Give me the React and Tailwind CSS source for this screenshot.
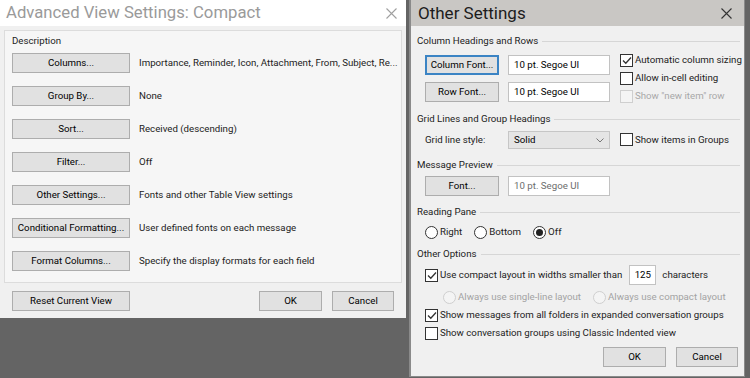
import React from 'react';

const font = { fontFamily: 'Roboto, "Open Sans", sans-serif' };

const WinButton = ({ children, className = '', focused = false }) => (
    <div
        className={`flex items-center justify-center h-[20px] bg-[#e1e1e1] text-[9.7px] text-black whitespace-nowrap ${focused ? 'border-2 border-[#3b84c4]' : 'border border-[#adadad]'} ${className}`}
    >
        {children}
    </div>
);

const Check = ({ checked = false, disabled = false }) => (
    <div className={`w-[13px] h-[13px] shrink-0 border flex items-center justify-center ${disabled ? 'border-[#cfcfcf] bg-[#f4f4f4]' : 'border-[#333] bg-white'}`}>
        {checked && (
            <svg width="10" height="9" viewBox="0 0 10 9">
                <path d="M1 4.5 L3.8 7.3 L9 1.5" fill="none" stroke="#333" strokeWidth="1.3" />
            </svg>
        )}
    </div>
);

const Radio = ({ checked = false, disabled = false }) => (
    <div className={`w-[13px] h-[13px] shrink-0 rounded-full border flex items-center justify-center ${disabled ? 'border-[#cfcfcf] bg-[#f4f4f4]' : 'border-[#333] bg-white'}`}>
        {checked && <div className="w-[7px] h-[7px] rounded-full bg-[#222]" />}
    </div>
);

const TextBox = ({ children, className = '', muted = false }) => (
    <div className={`h-[20px] bg-white border border-[#c2c2c2] flex items-center px-[5px] text-[9.7px] whitespace-nowrap ${muted ? 'text-[#6d6d6d]' : 'text-black'} ${className}`}>
        {children}
    </div>
);

const Heading = ({ children, className = '' }) => (
    <div className={`flex items-center gap-[4px] h-[14px] ${className}`}>
        <span className="text-[9.7px] text-[#222] whitespace-nowrap">{children}</span>
        <div className="flex-1 h-px bg-[#d6d6d6]" />
    </div>
);

const rows = [
    ['Columns...', 'Importance, Reminder, Icon, Attachment, From, Subject, Re...'],
    ['Group By...', 'None'],
    ['Sort...', 'Received (descending)'],
    ['Filter...', 'Off'],
    ['Other Settings...', 'Fonts and other Table View settings'],
    ['Conditional Formatting...', 'User defined fonts on each message'],
    ['Format Columns...', 'Specify the display formats for each field'],
];

const CloseX = ({ color }) => (
    <svg width="11" height="11" viewBox="0 0 11 11">
        <path d="M0.5 0.5 L10.5 10.5 M10.5 0.5 L0.5 10.5" stroke={color} strokeWidth="1.1" />
    </svg>
);

const AdvancedView = () => (
    <div className="w-[406px] h-[318px] bg-[#f0f0f0] flex flex-col shrink-0">
        <div className="h-[26px] bg-white flex items-center justify-between pl-[6px] pr-[9px]">
            <span className="text-[16.7px] text-[#9a9a9a] leading-none">Advanced View Settings: Compact</span>
            <CloseX color="#a0a0a0" />
        </div>
        <div className="mx-[4px] mt-[4px] h-[253px] border border-[#dcdcdc] bg-[#f6f6f6] pl-[7px] pt-[3px]">
            <div className="text-[9.7px] text-[#222] h-[14px] leading-[14px]">Description</div>
            <div className="flex flex-col gap-[13px] mt-[5px]">
                {rows.map(([label, desc]) => (
                    <div key={label} className="flex items-center h-[20px]">
                        <WinButton className="w-[118px]">{label}</WinButton>
                        <span className="ml-[9px] text-[9.7px] text-[#222] whitespace-nowrap">{desc}</span>
                    </div>
                ))}
            </div>
        </div>
        <div className="flex items-center mt-[8px] px-[12px]">
            <WinButton className="w-[118px]">Reset Current View</WinButton>
            <div className="flex-1" />
            <WinButton className="w-[63px]">OK</WinButton>
            <WinButton className="w-[62px] ml-[10px]">Cancel</WinButton>
        </div>
    </div>
);

const OtherSettings = () => (
    <div className="ml-[3px] w-[336px] h-[377px] bg-[#f0f0f0] border-l-2 border-r border-b border-[#8a8a8a] flex flex-col shrink-0">
        <div className="h-[26px] bg-[#c9c7c4] flex items-center justify-between pl-[7px] pr-[12px]">
            <span className="text-[17px] text-[#1c1c1c] leading-none">Other Settings</span>
            <CloseX color="#333" />
        </div>
        <div className="pl-[6px] pr-[4px]">
            <Heading className="mt-[8px]">Column Headings and Rows</Heading>
            <div className="flex mt-[2px]">
                <div className="flex flex-col gap-[7px] pl-[8px] pt-[5px]">
                    <div className="flex items-center">
                        <WinButton focused className="w-[74px]">Column Font...</WinButton>
                        <TextBox className="w-[102px] ml-[9px]">10 pt. Segoe UI</TextBox>
                    </div>
                    <div className="flex items-center">
                        <WinButton className="w-[74px]">Row Font...</WinButton>
                        <TextBox className="w-[102px] ml-[9px]">10 pt. Segoe UI</TextBox>
                    </div>
                </div>
                <div className="flex flex-col ml-[10px] text-[9.7px] whitespace-nowrap">
                    <div className="flex items-center gap-[2px] h-[18px] mt-[1px]"><Check checked /><span className="text-[#222]">Automatic column sizing</span></div>
                    <div className="flex items-center gap-[2px] h-[18px]"><Check /><span className="text-[#222]">Allow in-cell editing</span></div>
                    <div className="flex items-center gap-[2px] h-[18px]"><Check disabled /><span className="text-[#a8a8a8]">Show "new item" row</span></div>
                </div>
            </div>
            <Heading className="mt-[7px]">Grid Lines and Group Headings</Heading>
            <div className="flex items-center mt-[5px] pl-[8px] h-[18px] text-[9.7px] whitespace-nowrap">
                <span className="w-[83px] text-[#222]">Grid line style:</span>
                <div className="w-[102px] h-[18px] bg-[#e5e5e5] border border-[#c6c6c6] flex items-center justify-between px-[5px]">
                    <span>Solid</span>
                    <svg width="8" height="5" viewBox="0 0 8 5"><path d="M0.5 0.5 L4 4 L7.5 0.5" fill="none" stroke="#777" /></svg>
                </div>
                <div className="flex items-center gap-[2px] ml-[10px]"><Check /><span className="text-[#222]">Show items in Groups</span></div>
            </div>
            <Heading className="mt-[9px]">Message Preview</Heading>
            <div className="flex items-center pl-[8px] mt-[4px]">
                <WinButton className="w-[74px]">Font...</WinButton>
                <TextBox muted className="w-[102px] ml-[9px]">10 pt. Segoe UI</TextBox>
            </div>
            <Heading className="mt-[9px]">Reading Pane</Heading>
            <div className="flex items-center pl-[8px] mt-[6px] h-[14px] text-[9.7px] text-[#222]">
                <Radio /><span className="ml-[2px]">Right</span>
                <span className="ml-[12px]" /><Radio /><span className="ml-[2px]">Bottom</span>
                <span className="ml-[12px]" /><Radio checked /><span className="ml-[2px]">Off</span>
            </div>
            <Heading className="mt-[8px]">Other Options</Heading>
            <div className="flex items-center pl-[8px] mt-[4px] h-[20px] text-[9.7px] text-[#222] whitespace-nowrap">
                <Check checked />
                <span className="ml-[2px]">Use compact layout in widths smaller than</span>
                <TextBox className="w-[27px] ml-[7px] justify-center">125</TextBox>
                <span className="ml-[6px]">characters</span>
            </div>
            <div className="flex items-center pl-[26px] mt-[3px] h-[18px] text-[9.7px] text-[#a3a3a3] whitespace-nowrap">
                <Radio disabled /><span className="ml-[2px]">Always use single-line layout</span>
                <span className="ml-[12px]" /><Radio disabled /><span className="ml-[2px]">Always use compact layout</span>
            </div>
            <div className="flex items-center gap-[2px] pl-[8px] h-[18px] text-[9.7px] text-[#222] whitespace-nowrap">
                <Check checked /><span>Show messages from all folders in expanded conversation groups</span>
            </div>
            <div className="flex items-center gap-[2px] pl-[8px] h-[18px] text-[9.7px] text-[#222] whitespace-nowrap">
                <Check /><span>Show conversation groups using Classic Indented view</span>
            </div>
            <div className="flex justify-end gap-[10px] mt-[5px] pr-[2px]">
                <WinButton className="w-[63px]">OK</WinButton>
                <WinButton className="w-[62px]">Cancel</WinButton>
            </div>
        </div>
    </div>
);

export default function App() {
    return (
        <div className="w-[750px] h-[378px] bg-[#646464] flex items-start overflow-hidden" style={font}>
            <AdvancedView />
            <OtherSettings />
        </div>
    );
}
